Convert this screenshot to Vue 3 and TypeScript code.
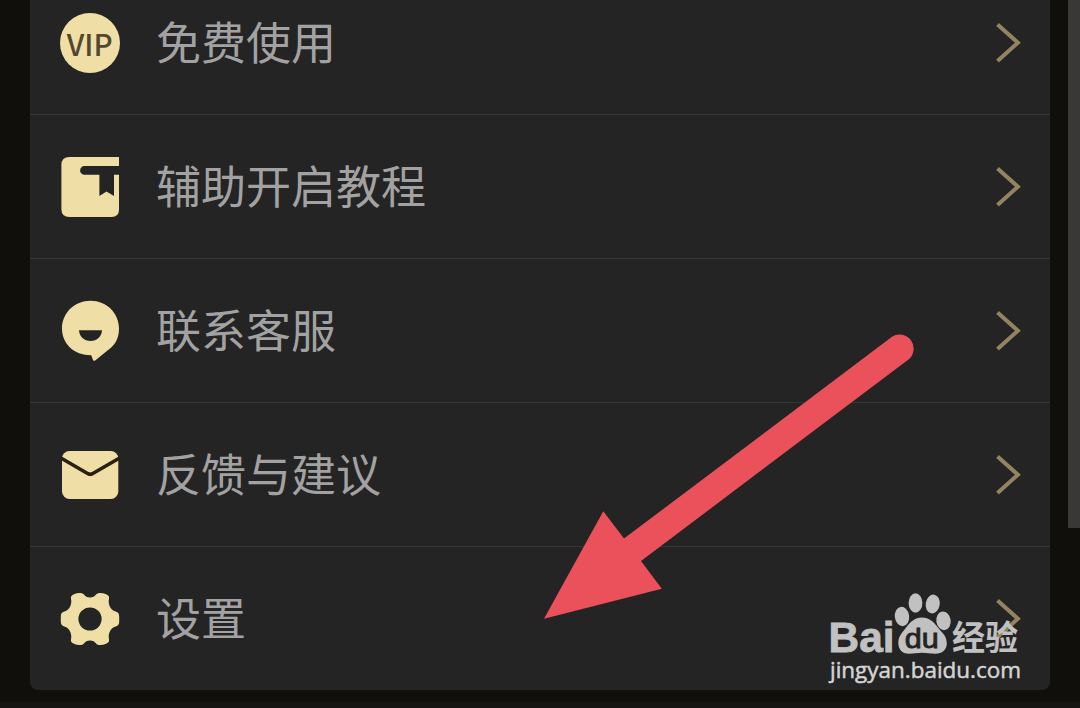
<script setup lang="ts">
type IconName = 'vip' | 'book' | 'chat' | 'mail' | 'gear'

interface MenuItem {
  icon: IconName
  label: string
}

const items: MenuItem[] = [
  { icon: 'vip', label: '免费使用' },
  { icon: 'book', label: '辅助开启教程' },
  { icon: 'chat', label: '联系客服' },
  { icon: 'mail', label: '反馈与建议' },
  { icon: 'gear', label: '设置' },
]

// The cog is one quarter outline, mirrored into the four quadrants.
const cogQuarter =
  'M0 0V-21.6C3 -21.6 4.500 -22.500 5.600 -24C6.800 -25.800 8.500 -26.100 10.500 -26.100C14 -26.100 17.500 -24.400 18.800 -22.800C19.600 -21.200 18.500 -19 18.700 -17C19.100 -12.500 21.500 -8.800 25 -7.700C28 -7 29.200 -5.500 29.200 -2.500V0Z'
const quadrants = [
  [1, 1],
  [-1, 1],
  [1, -1],
  [-1, -1],
]
</script>

<template>
  <div class="page">
    <main class="card">
      <div v-for="item in items" :key="item.icon" class="row">
        <svg class="icon" viewBox="0 0 64 64" width="64" height="64">
          <g v-if="item.icon === 'vip'">
            <circle class="gold" cx="32" cy="32" r="30" />
            <text class="vip" x="31.7" y="44.9" text-anchor="middle" textLength="46">VIP</text>
          </g>
          <g v-else-if="item.icon === 'book'">
            <path
              class="gold"
              d="M11.5 2H61V11H26.5A4.4 4.4 0 0 0 26.5 19.8H41.4V41L48.5 36.6L56 41V19.8H61V54.5Q61 62 53.5 62H11.5Q3.4 62 3.4 54V10Q3.4 2 11.5 2Z"
            />
          </g>
          <g v-else-if="item.icon === 'chat'">
            <path
              class="gold"
              d="M32.5 1.7C48.5 1.7 61 14 61 29.5C61 38 58 44 53.5 48.2L37.2 61.4Q35.4 62.5 34.8 60.6L33.2 56.2C15.5 56.2 4 44.5 4 29.5C4 14 16.5 1.7 32.5 1.7Z"
            />
            <path class="cut" d="M21 31.3H44C43.5 38 39 42 32.5 42C26 42 21.5 38 21 31.3Z" />
          </g>
          <g v-else-if="item.icon === 'mail'">
            <rect class="gold" x="4" y="8" width="56.3" height="48" rx="7.5" />
            <path class="fold" d="M2.5 14.8L30 30.7Q32.2 31.9 34.4 30.7L62 14.8" />
          </g>
          <g v-else>
            <path
              v-for="[sx, sy] in quadrants"
              :key="`${sx}${sy}`"
              class="gold"
              :transform="`translate(32 32) scale(${sx} ${sy})`"
              :d="cogQuarter"
            />
            <circle class="cut" cx="32" cy="32" r="11.6" />
          </g>
        </svg>
        <span class="label">{{ item.label }}</span>
        <svg class="chevron" viewBox="0 0 30 44" width="30" height="44">
          <path d="M4.5 3.4L24.9 21.7L4.5 40" />
        </svg>
      </div>
    </main>
    <aside class="scroll"></aside>

    <svg class="overlay" viewBox="0 0 1080 708" width="1080" height="708">
      <path
        class="arrow"
        d="M544 618.8L603.3 511.2L624 538.6L892 336.7A14.1 14.1 0 0 1 908.5 359.5L641 561L661.8 588.7Z"
      />
      <g class="mark">
        <text class="bai" x="828.5" y="651.8" textLength="66" lengthAdjust="spacingAndGlyphs">Bai</text>
        <ellipse cx="902" cy="616.5" rx="7.2" ry="9.7" transform="rotate(-8 902 616.5)" />
        <ellipse cx="915.5" cy="603" rx="6.9" ry="9.7" />
        <ellipse cx="932.7" cy="604" rx="7" ry="9.5" transform="rotate(10 932.7 604)" />
        <ellipse cx="943.5" cy="620.8" rx="7.2" ry="9.4" transform="rotate(-8 943.5 620.8)" />
        <path
          d="M922 617.5C929 617.5 934 622 937.5 627C941 632 946.8 635 946.8 643.5C946.8 650 942 653.8 935.5 653.8C930 653.8 927 652.8 922 652.8C917 652.8 914 653.8 909 653.8C902 653.8 898.3 649 898.3 643C898.3 635.5 903 632 906.5 627C910 622 915 617.5 922 617.5Z"
        />
        <text class="du" x="904.8" y="648.3" textLength="34" lengthAdjust="spacingAndGlyphs">du</text>
        <text class="jingyan" x="952" y="650" textLength="66" lengthAdjust="spacingAndGlyphs">经验</text>
        <text class="url" x="830" y="678" textLength="191" lengthAdjust="spacingAndGlyphs">jingyan.baidu.com</text>
      </g>
    </svg>
  </div>
</template>

<style>
body {
  background: #12110e;
}
</style>

<style scoped>
.page {
  position: relative;
  display: flex;
  align-items: flex-start;
  width: 1080px;
  height: 708px;
  overflow: hidden;
  background: linear-gradient(#110f0b 0 702px, #161514 702px);
  font-family: 'Noto Sans CJK SC', 'Noto Sans', sans-serif;
}

.card {
  box-sizing: border-box;
  width: 1020px;
  height: 719px;
  margin: -29px 18px 0 30px;
  overflow: hidden;
  border-radius: 8px;
  background: #242424;
}

.row {
  box-sizing: border-box;
  display: flex;
  align-items: center;
  height: 144px;
  padding: 1px 27px 0 28px;
  border-bottom: 1px solid #353535;
}

.row:last-child {
  border-bottom-color: transparent;
}

.icon {
  flex: none;
}

.label {
  flex: 1;
  margin-left: 34px;
  padding-bottom: 4px;
  color: #a2a2a2;
  font-size: 45px;
  line-height: 64px;
}

.gold {
  fill: #efdfa6;
}

.cut {
  fill: #242424;
}

.vip {
  fill: #50482f;
  font-size: 29.5px;
  font-weight: 500;
}

.fold {
  fill: none;
  stroke: #29210f;
  stroke-width: 3.6;
}

.chevron path {
  fill: none;
  stroke: #94835f;
  stroke-width: 4;
}

.scroll {
  flex: none;
  width: 12px;
  height: 528px;
  background: #393836;
}

.overlay {
  position: absolute;
  inset: 0;
  pointer-events: none;
}

.arrow {
  fill: #eb515b;
}

.mark {
  fill: #c1c1c1;
}

.bai {
  font: bold 43px 'Liberation Sans', sans-serif;
  stroke: #c1c1c1;
  stroke-width: 0.8;
}

.du {
  fill: #242424;
  stroke: #242424;
  stroke-width: 0.9;
  font: 28px 'Liberation Sans', sans-serif;
}

.jingyan {
  font-size: 34px;
  font-weight: 700;
}

.url {
  fill: #d4d4d4;
  stroke: #d4d4d4;
  stroke-width: 0.5;
  font: 22px 'Open Sans', sans-serif;
}
</style>
